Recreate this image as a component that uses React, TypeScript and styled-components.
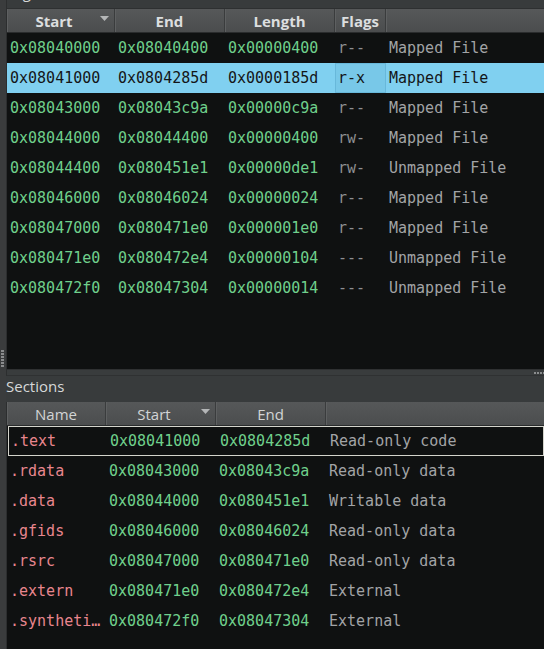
import styled, { createGlobalStyle } from "styled-components";

interface Segment {
    start: string;
    end: string;
    length: string;
    flags: string;
    kind: string;
}

interface Section {
    name: string;
    start: string;
    end: string;
    semantics: string;
}

const segments: Segment[] = [
    { start: "0x08040000", end: "0x08040400", length: "0x00000400", flags: "r--", kind: "Mapped File" },
    { start: "0x08041000", end: "0x0804285d", length: "0x0000185d", flags: "r-x", kind: "Mapped File" },
    { start: "0x08043000", end: "0x08043c9a", length: "0x00000c9a", flags: "r--", kind: "Mapped File" },
    { start: "0x08044000", end: "0x08044400", length: "0x00000400", flags: "rw-", kind: "Mapped File" },
    { start: "0x08044400", end: "0x080451e1", length: "0x00000de1", flags: "rw-", kind: "Unmapped File" },
    { start: "0x08046000", end: "0x08046024", length: "0x00000024", flags: "r--", kind: "Mapped File" },
    { start: "0x08047000", end: "0x080471e0", length: "0x000001e0", flags: "r--", kind: "Mapped File" },
    { start: "0x080471e0", end: "0x080472e4", length: "0x00000104", flags: "---", kind: "Unmapped File" },
    { start: "0x080472f0", end: "0x08047304", length: "0x00000014", flags: "---", kind: "Unmapped File" },
];

const sections: Section[] = [
    { name: ".text", start: "0x08041000", end: "0x0804285d", semantics: "Read-only code" },
    { name: ".rdata", start: "0x08043000", end: "0x08043c9a", semantics: "Read-only data" },
    { name: ".data", start: "0x08044000", end: "0x080451e1", semantics: "Writable data" },
    { name: ".gfids", start: "0x08046000", end: "0x08046024", semantics: "Read-only data" },
    { name: ".rsrc", start: "0x08047000", end: "0x080471e0", semantics: "Read-only data" },
    { name: ".extern", start: "0x080471e0", end: "0x080472e4", semantics: "External" },
    { name: ".synthetic_builtins", start: "0x080472f0", end: "0x08047304", semantics: "External" },
];

const SEGMENT_COLS = "108px 110px 110px 51px 1fr";
const SECTION_COLS = "99px 110px 110px 1fr";

function SortArrow() {
    return (
        <svg width="9" height="5" viewBox="0 0 9 5">
            <path d="M0 0 L9 0 L4.5 5 Z" fill="#b4b6b7" />
        </svg>
    );
}

export default function App() {
    return (
        <>
            <GlobalStyle />
            <Page>
                <Gutter>
                    <GripVertical />
                </Gutter>
                <Main>
                    <TopPane>
                        <TitleClip>
                            <PaneTitle>Segments</PaneTitle>
                        </TitleClip>
                        <HeaderRow $cols={SEGMENT_COLS}>
                            <HeaderCell $active $sorted>
                                Start
                                <ArrowSlot>
                                    <SortArrow />
                                </ArrowSlot>
                            </HeaderCell>
                            <HeaderCell $active>End</HeaderCell>
                            <HeaderCell $active>Length</HeaderCell>
                            <HeaderCell $active>Flags</HeaderCell>
                            <HeaderCell />
                        </HeaderRow>
                        <Body>
                            {segments.map((s, i) => {
                                const sel = i === 1;
                                return (
                                    <Row key={s.start} $cols={SEGMENT_COLS} $selected={sel}>
                                        <Cell $tone="addr" $selected={sel}>{s.start}</Cell>
                                        <Cell $tone="addr" $selected={sel}>{s.end}</Cell>
                                        <Cell $tone="addr" $selected={sel}>{s.length}</Cell>
                                        <Cell $tone="muted" $selected={sel} $focused={sel}>
                                            {s.flags}
                                        </Cell>
                                        <Cell $tone="text" $selected={sel}>{s.kind}</Cell>
                                    </Row>
                                );
                            })}
                        </Body>
                    </TopPane>
                    <Splitter>
                        <GripHorizontal />
                    </Splitter>
                    <BottomPane>
                        <PaneTitle>Sections</PaneTitle>
                        <HeaderRow $cols={SECTION_COLS}>
                            <HeaderCell>Name</HeaderCell>
                            <HeaderCell $sorted>
                                Start
                                <ArrowSlot>
                                    <SortArrow />
                                </ArrowSlot>
                            </HeaderCell>
                            <HeaderCell>End</HeaderCell>
                            <HeaderCell />
                        </HeaderRow>
                        <Body>
                            {sections.map((s, i) => (
                                <Row key={s.name} $cols={SECTION_COLS} $outlined={i === 0}>
                                    <Cell $tone="name">{s.name}</Cell>
                                    <Cell $tone="addr">{s.start}</Cell>
                                    <Cell $tone="addr">{s.end}</Cell>
                                    <Cell $tone="text">{s.semantics}</Cell>
                                </Row>
                            ))}
                        </Body>
                    </BottomPane>
                </Main>
            </Page>
        </>
    );
}

const GlobalStyle = createGlobalStyle`
    html, body {
        margin: 0;
        padding: 0;
        background: #383b3c;
    }
    * {
        box-sizing: border-box;
    }
`;

const Page = styled.div`
    display: flex;
    width: 544px;
    height: 649px;
    overflow: hidden;
    background: #383b3c;
    font-family: "Open Sans", "Liberation Sans", sans-serif;
`;

const Gutter = styled.div`
    width: 7px;
    flex-shrink: 0;
    display: flex;
    flex-direction: column;
    align-items: center;
    padding-top: 350px;
    background: #3a3c3d;
    border-right: 1px solid #2c2e2f;
`;

const GripVertical = styled.div`
    width: 3px;
    height: 17px;
    margin-right: 2px;
    background: repeating-linear-gradient(to bottom, #8a8c8d 0 2px, transparent 2px 3px);
`;

const Main = styled.div`
    flex: 1;
    display: flex;
    flex-direction: column;
    min-width: 0;
`;

const TopPane = styled.div`
    height: 369px;
    display: flex;
    flex-direction: column;
`;

const BottomPane = styled.div`
    flex: 1;
    display: flex;
    flex-direction: column;
    min-height: 0;
`;

const TitleClip = styled.div`
    height: 9px;
    overflow: hidden;
    display: flex;
    flex-direction: column;
    justify-content: flex-end;
    border-bottom: 1px solid #2e3031;
`;

const PaneTitle = styled.div`
    flex-shrink: 0;
    height: 26px;
    line-height: 20px;
    margin-left: -1px;
    font-size: 15px;
    color: #d6d8d9;
    background: #383b3c;
`;

const HeaderRow = styled.div<{ $cols: string }>`
    display: grid;
    grid-template-columns: ${({ $cols }) => $cols};
    height: 24px;
    flex-shrink: 0;
    background: linear-gradient(to bottom, #565859, #4b4d4e);
    border-bottom: 1px solid #2a2c2d;
`;

const HeaderCell = styled.div<{ $active?: boolean; $sorted?: boolean }>`
    position: relative;
    display: flex;
    align-items: center;
    justify-content: center;
    padding-right: ${({ $sorted }) => ($sorted ? "13px" : "0")};
    font-size: 15px;
    font-weight: ${({ $active }) => ($active ? 700 : 400)};
    color: ${({ $active }) => ($active ? "#dcdedf" : "#d2d4d5")};
    border-right: 1px solid #3a3c3d;
    box-shadow: inset 1px 0 0 #5e6061;

    &:last-child {
        border-right: none;
    }
`;

const ArrowSlot = styled.span`
    position: absolute;
    right: 5px;
    top: 7px;
    display: flex;
`;

const Body = styled.div`
    flex: 1;
    background: #0f1111;
    overflow: hidden;
`;

const Row = styled.div<{ $cols: string; $selected?: boolean; $outlined?: boolean }>`
    display: grid;
    grid-template-columns: ${({ $cols }) => $cols};
    height: 30px;
    background: ${({ $selected }) => ($selected ? "#80d0f0" : "transparent")};
    outline: ${({ $outlined }) => ($outlined ? "1px solid #d4d4cc" : "none")};
    outline-offset: -1px;
    margin-left: ${({ $outlined }) => ($outlined ? "1px" : "0")};
`;

const toneColors: Record<string, string> = {
    addr: "#6fd08c",
    muted: "#8e9092",
    text: "#a2a4a6",
    name: "#e8868e",
};

const Cell = styled.div<{ $tone: string; $selected?: boolean; $focused?: boolean }>`
    font-family: "DejaVu Sans Mono", "Liberation Mono", monospace;
    font-size: 15px;
    line-height: ${({ $focused }) => ($focused ? "28px" : "30px")};
    padding: 0 4px;
    padding-left: ${({ $focused }) => ($focused ? "2px" : "3px")};
    white-space: nowrap;
    overflow: hidden;
    text-overflow: ellipsis;
    color: ${({ $tone, $selected }) => ($selected ? "#141618" : toneColors[$tone])};
    background: ${({ $focused }) => ($focused ? "#78c8e8" : "transparent")};
    border: ${({ $focused }) => ($focused ? "1px solid #68b8da" : "none")};
`;

const Splitter = styled.div`
    height: 7px;
    flex-shrink: 0;
    display: flex;
    justify-content: flex-end;
    align-items: center;
    background: #393c3d;
    border-top: 1px solid #2f3132;
    border-bottom: 1px solid #2f3132;
`;

const GripHorizontal = styled.div`
    width: 10px;
    height: 2px;
    background: repeating-linear-gradient(to right, #8a8c8d 0 2px, transparent 2px 3px);
`;
